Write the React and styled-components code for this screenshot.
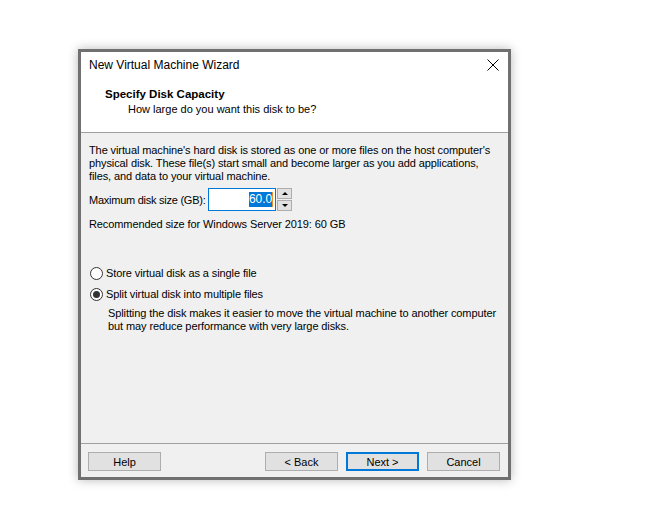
import React from 'react';
import styled, { createGlobalStyle } from 'styled-components';

const GlobalStyle = createGlobalStyle`
  html, body {
    margin: 0;
    padding: 0;
    background: #ffffff;
  }
  body {
    font-family: "Liberation Sans", Arial, sans-serif;
    font-size: 11px;
    letter-spacing: -0.1px;
    color: #000;
  }
`;

const Page = styled.div`
  width: 659px;
  height: 524px;
  padding: 49px 0 0 78px;
  box-sizing: border-box;
`;

const Window = styled.div`
  width: 433px;
  height: 431px;
  box-sizing: border-box;
  border: 3px solid #707070;
  box-shadow: 0 0 10px rgba(0, 0, 0, 0.28);
  display: flex;
  flex-direction: column;
  background: #f0f0f0;
`;

const TitleBar = styled.div`
  height: 26px;
  background: #fff;
  display: flex;
  align-items: center;
  justify-content: space-between;
  padding: 0 9px 0 8px;
  box-sizing: border-box;
`;

const Title = styled.span`
  font-size: 12px;
  letter-spacing: 0;
  line-height: 16px;
`;

const CloseButton = styled.svg`
  width: 12px;
  height: 12px;
`;

const Header = styled.div`
  height: 55px;
  background: #fff;
  border-bottom: 1px solid #a0a0a0;
  box-sizing: border-box;
  padding-top: 9px;
`;

const HeaderTitle = styled.div`
  font-weight: bold;
  font-size: 11.5px;
  letter-spacing: 0;
  padding-left: 24px;
  line-height: 15px;
`;

const HeaderSub = styled.div`
  letter-spacing: 0;
  padding-left: 47px;
  line-height: 15px;
`;

const Body = styled.div`
  flex: 1;
  padding: 11px 8px 0 8px;
  white-space: nowrap;
`;

const Para = styled.p`
  margin: 0;
  line-height: 13px;
`;

const SizeRow = styled.div`
  display: flex;
  align-items: center;
  margin-top: 5px;
  height: 23px;
`;

const Label = styled.span`
  width: 119px;
  letter-spacing: -0.25px;
`;

const NumberBox = styled.div`
  width: 68px;
  height: 23px;
  box-sizing: border-box;
  border: 1px solid #0078d7;
  background: #fff;
  display: flex;
  justify-content: flex-end;
  align-items: center;
  padding-right: 2px;
  font-size: 12px;
`;

const Selected = styled.span`
  background: #0078d7;
  color: #fff;
  line-height: 15px;
`;

const Caret = styled.span`
  width: 1px;
  height: 15px;
  background: #f08a24;
`;

const Spinner = styled.div`
  display: flex;
  flex-direction: column;
  gap: 1px;
  margin-left: 1px;
`;

const SpinButton = styled.div`
  width: 15px;
  height: 11px;
  box-sizing: border-box;
  border: 1px solid #adadad;
  background: #e1e1e1;
  display: flex;
  align-items: center;
  justify-content: center;
`;

const Arrow = styled.div`
  width: 0;
  height: 0;
  border-left: 3px solid transparent;
  border-right: 3px solid transparent;
  ${p => (p.up ? 'border-bottom: 3px solid #000;' : 'border-top: 3px solid #000;')}
`;

const Recommended = styled(Para)`
  margin-top: 7px;
`;

const RadioGroup = styled.div`
  margin-top: 36px;
  display: flex;
  flex-direction: column;
  gap: 8px;
`;

const RadioRow = styled.label`
  display: flex;
  align-items: center;
  gap: 3px;
  line-height: 13px;
  padding-left: 1px;
`;

const RadioCircle = styled.span`
  width: 13px;
  height: 13px;
  box-sizing: border-box;
  border-radius: 50%;
  border: 1px solid #333;
  background: #fff;
  display: flex;
  align-items: center;
  justify-content: center;
  &::after {
    content: '';
    display: ${p => (p.checked ? 'block' : 'none')};
    width: 7px;
    height: 7px;
    border-radius: 50%;
    background: #333;
  }
`;

const RadioNote = styled(Para)`
  margin-top: 6px;
  padding-left: 19px;
`;

const Footer = styled.div`
  height: 34px;
  border-top: 1px solid #a0a0a0;
  box-sizing: border-box;
  display: flex;
  align-items: flex-start;
  padding: 8px 8px 0 7px;
  gap: 8px;
`;

const Spacer = styled.div`
  flex: 1;
`;

const Button = styled.div`
  width: 73px;
  height: 19px;
  box-sizing: border-box;
  border: ${p => (p.primary ? '2px solid #0078d7' : '1px solid #adadad')};
  background: #e1e1e1;
  display: flex;
  align-items: center;
  justify-content: center;
  line-height: 14px;
  letter-spacing: 0;
`;

export default function App() {
  return (
    <Page>
      <GlobalStyle />
      <Window>
        <TitleBar>
          <Title>New Virtual Machine Wizard</Title>
          <CloseButton viewBox="0 0 12 12">
            <path d="M0.5 0.5 L11.5 11.5 M11.5 0.5 L0.5 11.5" stroke="#000" strokeWidth="1" />
          </CloseButton>
        </TitleBar>
        <Header>
          <HeaderTitle>Specify Disk Capacity</HeaderTitle>
          <HeaderSub>How large do you want this disk to be?</HeaderSub>
        </Header>
        <Body>
          <Para>
            The virtual machine's hard disk is stored as one or more files on the host computer's
            <br />
            physical disk. These file(s) start small and become larger as you add applications,
            <br />
            files, and data to your virtual machine.
          </Para>
          <SizeRow>
            <Label>Maximum disk size (GB):</Label>
            <NumberBox>
              <Selected>60.0</Selected>
              <Caret />
            </NumberBox>
            <Spinner>
              <SpinButton><Arrow up /></SpinButton>
              <SpinButton><Arrow /></SpinButton>
            </Spinner>
          </SizeRow>
          <Recommended>Recommended size for Windows Server 2019: 60 GB</Recommended>
          <RadioGroup>
            <RadioRow>
              <RadioCircle />
              Store virtual disk as a single file
            </RadioRow>
            <RadioRow>
              <RadioCircle checked />
              Split virtual disk into multiple files
            </RadioRow>
          </RadioGroup>
          <RadioNote>
            Splitting the disk makes it easier to move the virtual machine to another computer
            <br />
            but may reduce performance with very large disks.
          </RadioNote>
        </Body>
        <Footer>
          <Button>Help</Button>
          <Spacer />
          <Button>&lt; Back</Button>
          <Button primary>Next &gt;</Button>
          <Button>Cancel</Button>
        </Footer>
      </Window>
    </Page>
  );
}
